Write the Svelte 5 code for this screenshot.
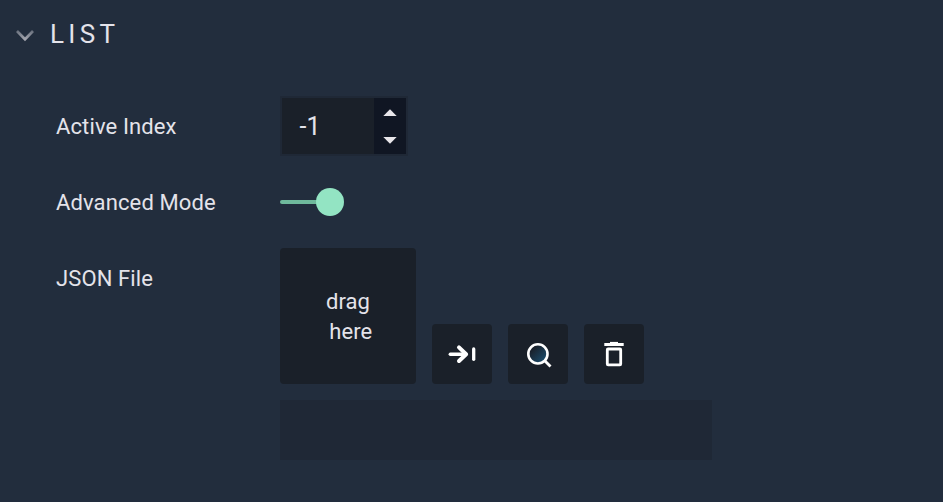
<script>
  let activeIndex = $state(-1);
  let open = $state(true);
</script>

<section class="panel">
  <header>
    <button class="toggle" aria-label="Collapse" onclick={() => (open = !open)}>
      <svg width="20" height="14" viewBox="0 0 20 14">
        <defs>
          <linearGradient id="fade" x1="0" y1="0" x2="0" y2="1">
            <stop offset="0" stop-color="#6a717e" />
            <stop offset="1" stop-color="#a3a5ae" />
          </linearGradient>
        </defs>
        <path d="M2 2 L10 10.2 L18 2" fill="none" stroke="url(#fade)" stroke-width="2.7" />
      </svg>
    </button>
    <h2>LIST</h2>
  </header>

  {#if open}
    <div class="row">
      <span class="label">Active Index</span>
      <div class="number">
        <span class="value">{activeIndex}</span>
        <div class="spin">
          <button aria-label="Increase" onclick={() => activeIndex++}>
            <svg width="14" height="7" viewBox="0 0 14 7"><path d="M0.3 7 L7 0.2 L13.7 7 Z" fill="#e8e6ea" /></svg>
          </button>
          <button aria-label="Decrease" onclick={() => activeIndex--}>
            <svg width="14" height="7" viewBox="0 0 14 7"><path d="M0.3 0 L7 6.8 L13.7 0 Z" fill="#e8e6ea" /></svg>
          </button>
        </div>
      </div>
    </div>

    <div class="row">
      <span class="label">Advanced Mode</span>
      <div class="switch"><i class="track"></i><i class="knob"></i></div>
    </div>

    <div class="row file">
      <span class="label">JSON File</span>
      <div class="content">
        <div class="tools">
          <div class="drop"><span>drag</span><span class="second">here</span></div>
          <button class="tool" aria-label="Use selection">
            <svg width="60" height="60" viewBox="0 0 60 60" fill="none" stroke="#fff" stroke-linecap="round" stroke-linejoin="round">
              <path d="M18.3 30.2 H34" stroke-width="3.4" />
              <path d="M27 23.4 L34.1 30.2 L27 37" stroke-width="4" />
              <path d="M41.7 24.9 V35.3" stroke-width="3.3" />
            </svg>
          </button>
          <button class="tool" aria-label="Browse">
            <svg width="60" height="60" viewBox="0 0 60 60">
              <defs>
                <linearGradient id="lens" x1="0" y1="0" x2="1" y2="1">
                  <stop offset="0.25" stop-color="#1a222d" />
                  <stop offset="0.9" stop-color="#1b4f70" />
                </linearGradient>
              </defs>
              <circle cx="29.9" cy="29.9" r="9.6" fill="url(#lens)" stroke="#fff" stroke-width="2.6" />
              <path d="M36.5 36.5 L42.5 42.5" stroke="#fff" stroke-width="2.8" />
            </svg>
          </button>
          <button class="tool" aria-label="Delete">
            <svg width="60" height="60" viewBox="0 0 60 60" fill="none" stroke="#fff">
              <path d="M20.3 20.5 H39.7" stroke-width="3" />
              <path d="M26 18.8 H34" stroke-width="1.8" />
              <rect x="23.3" y="25" width="13.4" height="15.9" rx="0.8" stroke-width="2.8" />
            </svg>
          </button>
        </div>
        <div class="path"></div>
      </div>
    </div>
  {/if}
</section>

<style>
  :global(body) {
    margin: 0;
    background: #222d3d;
  }
  .panel {
    box-sizing: border-box;
    width: 943px;
    height: 502px;
    overflow: hidden;
    background: #222d3d;
    color: #e4e3ea;
    font-family: Roboto, sans-serif;
    font-size: 22px;
  }
  header {
    display: flex;
    align-items: center;
    height: 68px;
    padding-left: 15px;
    margin-bottom: 28px;
  }
  button {
    border: 0;
    padding: 0;
    background: none;
    color: inherit;
  }
  svg {
    display: block;
  }
  .toggle {
    width: 20px;
    margin: 3px 15px 0 0;
  }
  h2 {
    margin: 0;
    font-size: 26px;
    font-weight: 400;
    letter-spacing: 4.3px;
    line-height: 30px;
  }
  .row {
    display: flex;
    height: 60px;
    margin-bottom: 16px;
    padding-left: 56px;
  }
  .label {
    width: 224px;
    flex: none;
    line-height: 62px;
    letter-spacing: 0.12px;
  }
  .number {
    box-sizing: border-box;
    display: flex;
    width: 128px;
    height: 60px;
    border: 2px solid #1f2836;
    background: #1a2029;
  }
  .value {
    flex: 1;
    padding-left: 17.5px;
    font-size: 25px;
    line-height: 57px;
  }
  .spin {
    display: flex;
    flex-direction: column;
    width: 32px;
    background: #101623;
  }
  .spin button {
    display: flex;
    flex: 1;
    align-items: center;
    justify-content: center;
  }
  .switch {
    display: flex;
    align-items: center;
  }
  .track {
    width: 40px;
    height: 4px;
    margin-right: -4px;
    border-radius: 2px;
    background: #6fb99c;
  }
  .knob {
    width: 28px;
    height: 28px;
    border-radius: 50%;
    background: #93e4c3;
  }
  .file {
    height: 212px;
  }
  .tools {
    display: flex;
    align-items: flex-end;
    gap: 16px;
    margin-bottom: 16px;
  }
  .drop {
    box-sizing: border-box;
    display: flex;
    flex-direction: column;
    align-items: center;
    justify-content: center;
    width: 136px;
    height: 136px;
    padding-top: 2px;
    border-radius: 4px;
    background: #1a2029;
    line-height: 30px;
    letter-spacing: 0.1px;
  }
  .second {
    padding-left: 5.5px;
  }
  .tool {
    width: 60px;
    height: 60px;
    border-radius: 4px;
    background: #1a2029;
  }
  .path {
    width: 432px;
    height: 60px;
    background: #1f2836;
  }
</style>
